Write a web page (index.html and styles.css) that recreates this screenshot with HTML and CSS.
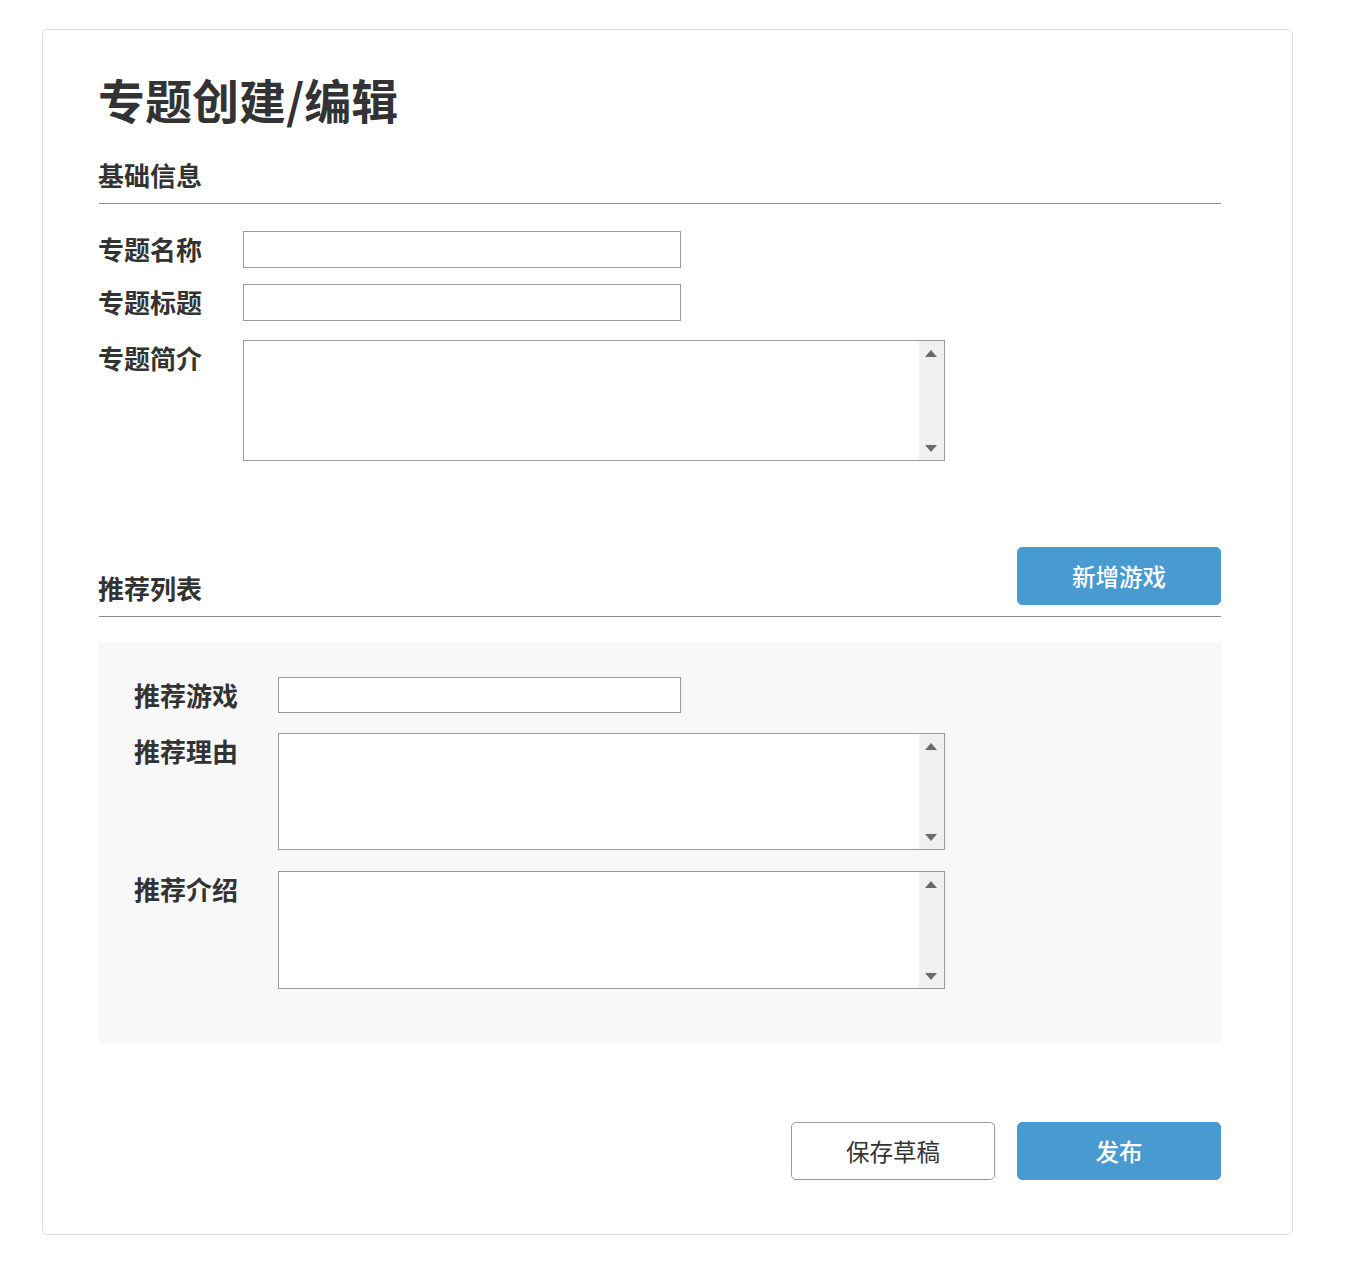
FILE: index.html
```html
<!DOCTYPE html>
<html lang="zh-CN">
<head>
<meta charset="utf-8">
<title>专题创建/编辑</title>
<link rel="stylesheet" href="styles.css">
</head>
<body>
<div class="card">
  <h1 class="title">专题创建/编辑</h1>

  <div class="section-head section-head--basic">
    <h2 class="section-title">基础信息</h2>
  </div>

  <div class="form">
    <div class="row">
      <label class="label">专题名称</label>
      <input class="input input--short" type="text">
    </div>
    <div class="row">
      <label class="label">专题标题</label>
      <input class="input input--short" type="text">
    </div>
    <div class="row row--area">
      <label class="label">专题简介</label>
      <div class="area-wrap area-wrap--main">
        <textarea class="area"></textarea>
        <div class="fake-scroll"><span class="arrow arrow--up"></span><span class="arrow arrow--down"></span></div>
      </div>
    </div>
  </div>

  <div class="section-head section-head--list">
    <h2 class="section-title">推荐列表</h2>
    <button class="btn btn--primary btn--add">新增游戏</button>
  </div>

  <div class="panel">
    <div class="row">
      <label class="label label--panel">推荐游戏</label>
      <input class="input input--panel" type="text">
    </div>
    <div class="row row--area2">
      <label class="label label--panel">推荐理由</label>
      <div class="area-wrap area-wrap--panel">
        <textarea class="area"></textarea>
        <div class="fake-scroll"><span class="arrow arrow--up"></span><span class="arrow arrow--down"></span></div>
      </div>
    </div>
    <div class="row row--area3">
      <label class="label label--panel">推荐介绍</label>
      <div class="area-wrap area-wrap--panel area-wrap--tall">
        <textarea class="area"></textarea>
        <div class="fake-scroll"><span class="arrow arrow--up"></span><span class="arrow arrow--down"></span></div>
      </div>
    </div>
  </div>

  <div class="actions">
    <button class="btn btn--ghost">保存草稿</button>
    <button class="btn btn--primary">发布</button>
  </div>
</div>
</body>
</html>
```

FILE: styles.css
```css
* { box-sizing: border-box; }

html, body {
  margin: 0;
  padding: 0;
  background: #ffffff;
}

body {
  padding: 29px 0 0 42px;
  font-family: "Noto Sans CJK SC", "Noto Sans", sans-serif;
  color: #333333;
}

.card {
  width: 1251px;
  height: 1206px;
  border: 1px solid #dcdcdc;
  border-radius: 5px;
  padding: 45px 71px 0 56px;
}

.title {
  margin: 0 0 0 -1px;
  font-size: 47px;
  line-height: 48px;
  font-weight: 700;
  color: #333333;
}

.section-head {
  display: flex;
  align-items: flex-end;
  justify-content: space-between;
  border-bottom: 1px solid #8a8a8a;
}

.section-head--basic {
  margin-top: 39px;
}

.section-head--list {
  margin-top: 86px;
}

.section-title {
  margin: 0 0 0 -1px;
  font-size: 26px;
  line-height: 26px;
  font-weight: 700;
  padding-bottom: 15px;
  color: #333333;
}

.form {
  padding-top: 27px;
}

.row {
  display: flex;
  align-items: flex-start;
}

.row + .row {
  margin-top: 16px;
}

.row--area { margin-top: 19px !important; }
.row--area2 { margin-top: 20px !important; }
.row--area3 { margin-top: 21px !important; }

.label {
  width: 144px;
  flex: none;
  margin-left: -1px;
  padding-right: 0;
  font-size: 26px;
  line-height: 36px;
  font-weight: 700;
  color: #333333;
}

.label--panel {
  width: 143px;
  line-height: 35px;
}

.input {
  height: 37px;
  margin: 0 0 0 1px;
  border: 1px solid #9a9a9a;
  background: #ffffff;
  padding: 0 8px;
  font-family: inherit;
  font-size: 16px;
  outline: none;
}

.input--short { width: 438px; }
.input--panel { width: 403px; height: 36px; }

.area-wrap {
  position: relative;
  margin-left: 1px;
  border: 1px solid #9a9a9a;
  background: #ffffff;
}

.area-wrap--main { width: 702px; height: 121px; }
.area-wrap--panel { width: 667px; height: 117px; }
.area-wrap--tall { height: 118px; }

.area {
  display: block;
  width: 100%;
  height: 100%;
  border: none;
  margin: 0;
  padding: 6px 8px;
  resize: none;
  overflow: hidden;
  outline: none;
  background: transparent;
  font-family: inherit;
  font-size: 16px;
}

.fake-scroll {
  position: absolute;
  top: 0;
  right: 0;
  bottom: 0;
  width: 25px;
  background: #f0f0f0;
}

.arrow {
  position: absolute;
  left: 6px;
  width: 0;
  height: 0;
  border-left: 6px solid transparent;
  border-right: 6px solid transparent;
}

.arrow--up {
  top: 9px;
  border-bottom: 7px solid #6a6a6a;
}

.arrow--down {
  bottom: 8px;
  border-top: 7px solid #6a6a6a;
}

.panel {
  margin-top: 25px;
  background: #f8f8f8;
  height: 401px;
  padding: 35px 0 0 36px;
}

.btn {
  width: 204px;
  height: 58px;
  border-radius: 5px;
  font-family: inherit;
  font-size: 23.5px;
  line-height: 1;
  cursor: pointer;
  margin: 0;
  padding: 2px 0 0;
}

.btn--primary {
  background: #4a9ad2;
  border: 1px solid #4a9ad2;
  color: #ffffff;
  font-weight: 500;
}

.btn--ghost {
  background: #ffffff;
  border: 1px solid #999999;
  color: #333333;
  font-weight: 400;
}

.btn--add {
  margin-bottom: 11px;
}

.actions {
  display: flex;
  justify-content: flex-end;
  gap: 22px;
  margin-top: 79px;
}
```
